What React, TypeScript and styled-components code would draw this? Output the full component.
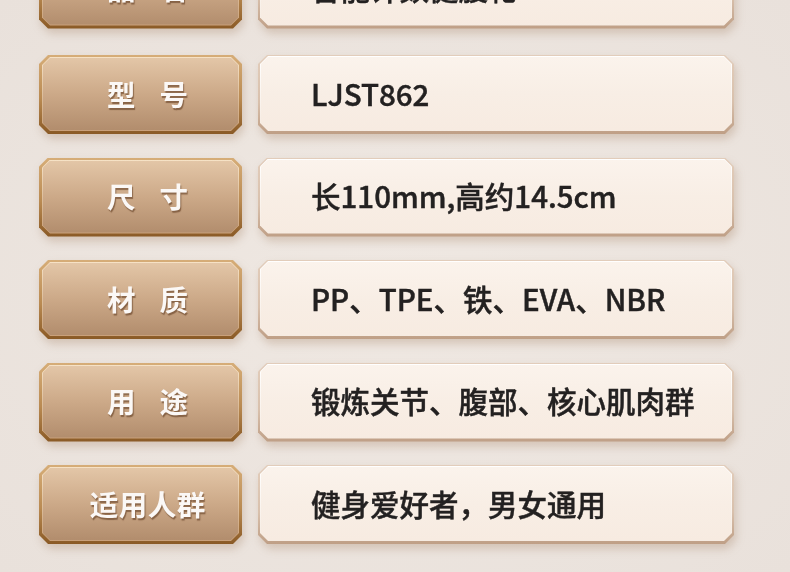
import React from "react";
import styled, { createGlobalStyle } from "styled-components";

const GlobalStyle = createGlobalStyle`
  html, body {
    margin: 0;
    padding: 0;
    background: #ebe4de;
  }
  body {
    font-family: "Noto Sans CJK SC", "Noto Sans", sans-serif;
  }
`;

const oct = (c: number) =>
  `polygon(${c}px 0, calc(100% - ${c}px) 0, 100% ${c}px, 100% calc(100% - ${c}px), calc(100% - ${c}px) 100%, ${c}px 100%, 0 calc(100% - ${c}px), 0 ${c}px)`;

const Page = styled.div`
  width: 790px;
  height: 572px;
  overflow: hidden;
  background: radial-gradient(ellipse at 50% 50%, #efe8e2 0%, #e9e1db 100%);
`;

const List = styled.div`
  display: flex;
  flex-direction: column;
  gap: 23.5px;
  margin-top: -50.5px;
  padding-left: 39px;
`;

const Row = styled.div`
  display: grid;
  grid-template-columns: 203px 476px;
  column-gap: 16px;
  height: 79px;
  &:first-child {
    margin-bottom: 3px;
  }
`;

const Shadowed = styled.div`
  filter: drop-shadow(2px 5px 4px rgba(150, 110, 80, 0.28));
  height: 100%;
`;

const LabelOuter = styled.div`
  height: 100%;
  box-sizing: border-box;
  clip-path: ${oct(9)};
  background: linear-gradient(to bottom, #d6ad78 0%, #b98a52 55%, #8a5a26 100%);
  padding: 2px 3px 3px 3px;
`;

const LabelMid = styled.div`
  height: 100%;
  box-sizing: border-box;
  clip-path: ${oct(8)};
  background: linear-gradient(to bottom, #f6e2c6, #d9b996 60%, #c9a07a);
  padding: 1px;
`;

const LabelFill = styled.div`
  height: 100%;
  box-sizing: border-box;
  clip-path: ${oct(7)};
  background: linear-gradient(to bottom, #e3c6a7 0%, #cca988 50%, #b28d6d 100%);
  display: flex;
  align-items: center;
  justify-content: center;
  padding-left: 14px;
`;

const LabelText = styled.div<{ $gap: number }>`
  display: flex;
  gap: ${(p) => p.$gap}px;
  font-family: "Noto Sans CJK SC", sans-serif;
  font-weight: 700;
  font-size: 28.5px;
  line-height: 1;
  color: #fbf8f6;
  text-shadow: 1px 2px 1px rgba(95, 58, 32, 0.6);
`;

const ValueOuter = styled.div`
  height: 100%;
  box-sizing: border-box;
  clip-path: ${oct(9)};
  background: linear-gradient(to bottom, #e2cdbb 0%, #d8c0ac 60%, #bf9f86 100%);
  padding: 1px 2px 3px 2px;
`;

const ValueMid = styled.div`
  height: 100%;
  box-sizing: border-box;
  clip-path: ${oct(8)};
  background: linear-gradient(to bottom, #ffffff, #f6ebe1);
  padding: 1px;
`;

const ValueFill = styled.div`
  height: 100%;
  box-sizing: border-box;
  clip-path: ${oct(7)};
  background: linear-gradient(to bottom, #fbf3ec 0%, #f8eee5 50%, #f7ebe1 100%);
  display: flex;
  align-items: center;
  padding-left: 50px;
`;

const ValueText = styled.div`
  font-family: "Noto Sans CJK SC", sans-serif;
  font-weight: 500;
  font-size: 29.5px;
  line-height: 1;
  color: #232121;
  -webkit-text-stroke: 0.45px #232121;
  white-space: nowrap;
`;

type Item = { label: string; value: string };

const items: Item[] = [
  { label: "品名", value: "智能计数健腹轮" },
  { label: "型号", value: "LJST862" },
  { label: "尺寸", value: "长110mm,高约14.5cm" },
  { label: "材质", value: "PP、TPE、铁、EVA、NBR" },
  { label: "用途", value: "锻炼关节、腹部、核心肌肉群" },
  { label: "适用人群", value: "健身爱好者，男女通用" },
];

export default function App() {
  return (
    <Page>
      <GlobalStyle />
      <List>
        {items.map((it) => {
          const chars = Array.from(it.label);
          return (
            <Row key={it.label}>
              <Shadowed>
                <LabelOuter>
                  <LabelMid>
                    <LabelFill>
                      <LabelText $gap={chars.length === 2 ? 24 : 0.5}>
                        {chars.map((c, i) => (
                          <span key={i}>{c}</span>
                        ))}
                      </LabelText>
                    </LabelFill>
                  </LabelMid>
                </LabelOuter>
              </Shadowed>
              <Shadowed>
                <ValueOuter>
                  <ValueMid>
                    <ValueFill>
                      <ValueText>{it.value}</ValueText>
                    </ValueFill>
                  </ValueMid>
                </ValueOuter>
              </Shadowed>
            </Row>
          );
        })}
      </List>
    </Page>
  );
}
